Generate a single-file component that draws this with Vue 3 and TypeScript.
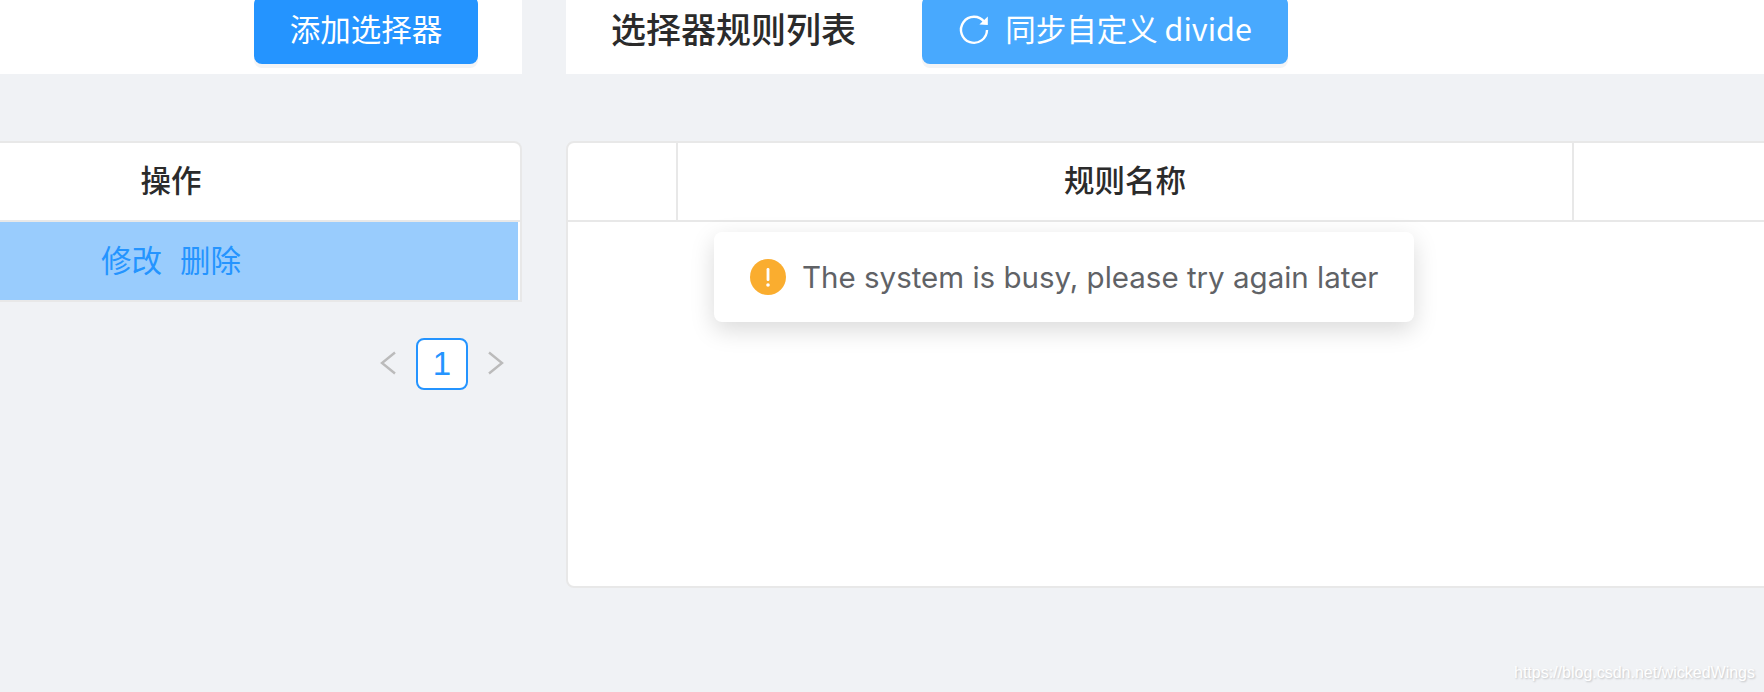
<script setup lang="ts">
const rightColumns = ['', '规则名称', '']
</script>

<template>
  <div class="page">
    <section class="column left">
      <div class="bar bar-left">
        <button class="btn primary add">添加选择器</button>
      </div>
      <div class="table-left">
        <div class="head-left"><span class="cell-op head-text">操作</span></div>
        <div class="row-left">
          <div class="cell-op actions">
            <a>修改</a>
            <a>删除</a>
          </div>
        </div>
      </div>
      <nav class="pager">
        <svg class="chev" viewBox="0 0 16 24"><path d="M15 1.5 2 12l13 10.5" /></svg>
        <span class="page-num">1</span>
        <svg class="chev" viewBox="0 0 16 24"><path d="M1 1.5 14 12 1 22.5" /></svg>
      </nav>
    </section>

    <section class="column right">
      <div class="bar bar-right">
        <h2 class="title">选择器规则列表</h2>
        <button class="btn sync">
          <svg class="reload" viewBox="0 0 32 32">
            <path d="M26.4 8A13 13 0 1 0 29 16" />
            <path class="fill" d="M29.8 2.6v8.4l-8.4-.6z" />
          </svg>
          <span>同步自定义 divide</span>
        </button>
      </div>
      <div class="table-right">
        <div class="head-right">
          <div v-for="(c, i) in rightColumns" :key="i" class="col head-text">{{ c }}</div>
        </div>
        <div class="toast">
          <svg class="toast-icon" viewBox="0 0 36 36">
            <circle cx="18" cy="18" r="18" />
            <rect class="mark" x="16.6" y="9" width="2.8" height="13" rx="1.2" />
            <circle class="mark" cx="18" cy="26" r="1.8" />
          </svg>
          <span class="toast-text">The system is busy, please try again later</span>
        </div>
      </div>
    </section>

    <div class="watermark">https://blog.csdn.net/wickedWings</div>
  </div>
</template>

<style>
html, body { margin: 0; background: #f0f2f5; }
</style>

<style scoped>
.page {
  position: relative;
  display: flex;
  gap: 44px;
  height: 692px;
  overflow: hidden;
  background: #f0f2f5;
  font-family: "Noto Sans CJK SC", "Noto Sans", sans-serif;
  color: #2b2b2b;
}
.column { display: flex; flex-direction: column; min-width: 0; }
.left { width: 522px; flex: none; }
.right { flex: 1; }
.bar { height: 74px; background: #fff; display: flex; align-items: flex-start; flex: none; }
.bar-left { justify-content: flex-end; padding-right: 44px; }
.bar-right { padding-left: 45px; gap: 66px; }
.btn {
  box-sizing: border-box;
  height: 68px;
  margin-top: -4px;
  border: 0;
  border-radius: 8px;
  color: #fff;
  font: inherit;
  font-size: 30.5px;
  box-shadow: 0 4px 0 #f3f4f6;
  padding: 0 0 4px;
}
.primary { background: #2494ff; width: 224px; }
.sync {
  background: #48a9fe;
  width: 366px;
  display: flex;
  align-items: center;
  justify-content: center;
  gap: 15px;
}
.reload { width: 32px; height: 32px; margin-top: 4px; fill: none; stroke: #fff; stroke-width: 2.4; }
.reload .fill { fill: #fff; stroke: none; }
.title { margin: 0; font-size: 35px; font-weight: 500; line-height: 55px; color: #2b2b2b; }
.table-left {
  margin-top: 67px;
  background: #fff;
  border-top: 2px solid #e8e8e8;
  border-right: 2px solid #e8e8e8;
  border-bottom: 2px solid #e8e8e8;
  border-top-right-radius: 8px;
}
.head-left { box-sizing: border-box; height: 79px; border-bottom: 2px solid #e8e8e8; display: flex; align-items: center; padding-bottom: 6px; }
.head-text { font-size: 30.5px; font-weight: 500; text-align: center; color: #2b2b2b; }
.cell-op { width: 342px; text-align: center; }
.row-left { box-sizing: border-box; height: 78px; background: #99ccfd; margin-right: 2px; display: flex; align-items: center; padding-bottom: 4px; }
.actions { display: flex; justify-content: center; gap: 18px; font-size: 30.5px; color: #2494ff; }
.pager { display: flex; align-items: center; justify-content: flex-end; margin-top: 36px; padding-right: 18px; gap: 20px; }
.chev { width: 16px; height: 24px; margin-top: -2px; fill: none; stroke: #bbb; stroke-width: 2.4; }
.page-num {
  box-sizing: border-box;
  width: 52px;
  height: 52px;
  border: 2px solid #2494ff;
  border-radius: 8px;
  background: #fff;
  color: #2494ff;
  font-size: 33px;
  display: flex;
  align-items: center;
  justify-content: center;
  font-family: "Liberation Sans", sans-serif;
}
.table-right {
  position: relative;
  box-sizing: border-box;
  height: 447px;
  margin-top: 67px;
  margin-right: -8px;
  background: #fff;
  border: 2px solid #e8e8e8;
  border-radius: 8px;
}
.head-right { box-sizing: border-box; display: grid; grid-template-columns: 110px 896px 1fr; height: 79px; border-bottom: 2px solid #e8e8e8; }
.col { display: flex; align-items: center; justify-content: center; border-right: 2px solid #e8e8e8; padding-bottom: 6px; }
.col:last-child { border-right: 0; }
.toast {
  position: absolute;
  left: 146px;
  top: 89px;
  box-sizing: border-box;
  width: 700px;
  height: 90px;
  display: flex;
  align-items: center;
  gap: 16px;
  padding-left: 36px;
  background: #fff;
  border-radius: 8px;
  box-shadow: 0 8px 24px rgba(0, 0, 0, 0.15);
}
.toast-icon { width: 36px; height: 36px; flex: none; fill: #faad2f; }
.toast-icon .mark { fill: #fff; }
.toast-text { font-family: "Inter", sans-serif; font-size: 29.5px; color: #606266; white-space: nowrap; }
.watermark {
  position: absolute;
  left: 1514px;
  top: 664px;
  font-family: "Liberation Sans", sans-serif;
  font-size: 16px;
  color: #fff;
  text-shadow: 1px 1px 2px rgba(0, 0, 0, 0.2);
  white-space: nowrap;
}
</style>
